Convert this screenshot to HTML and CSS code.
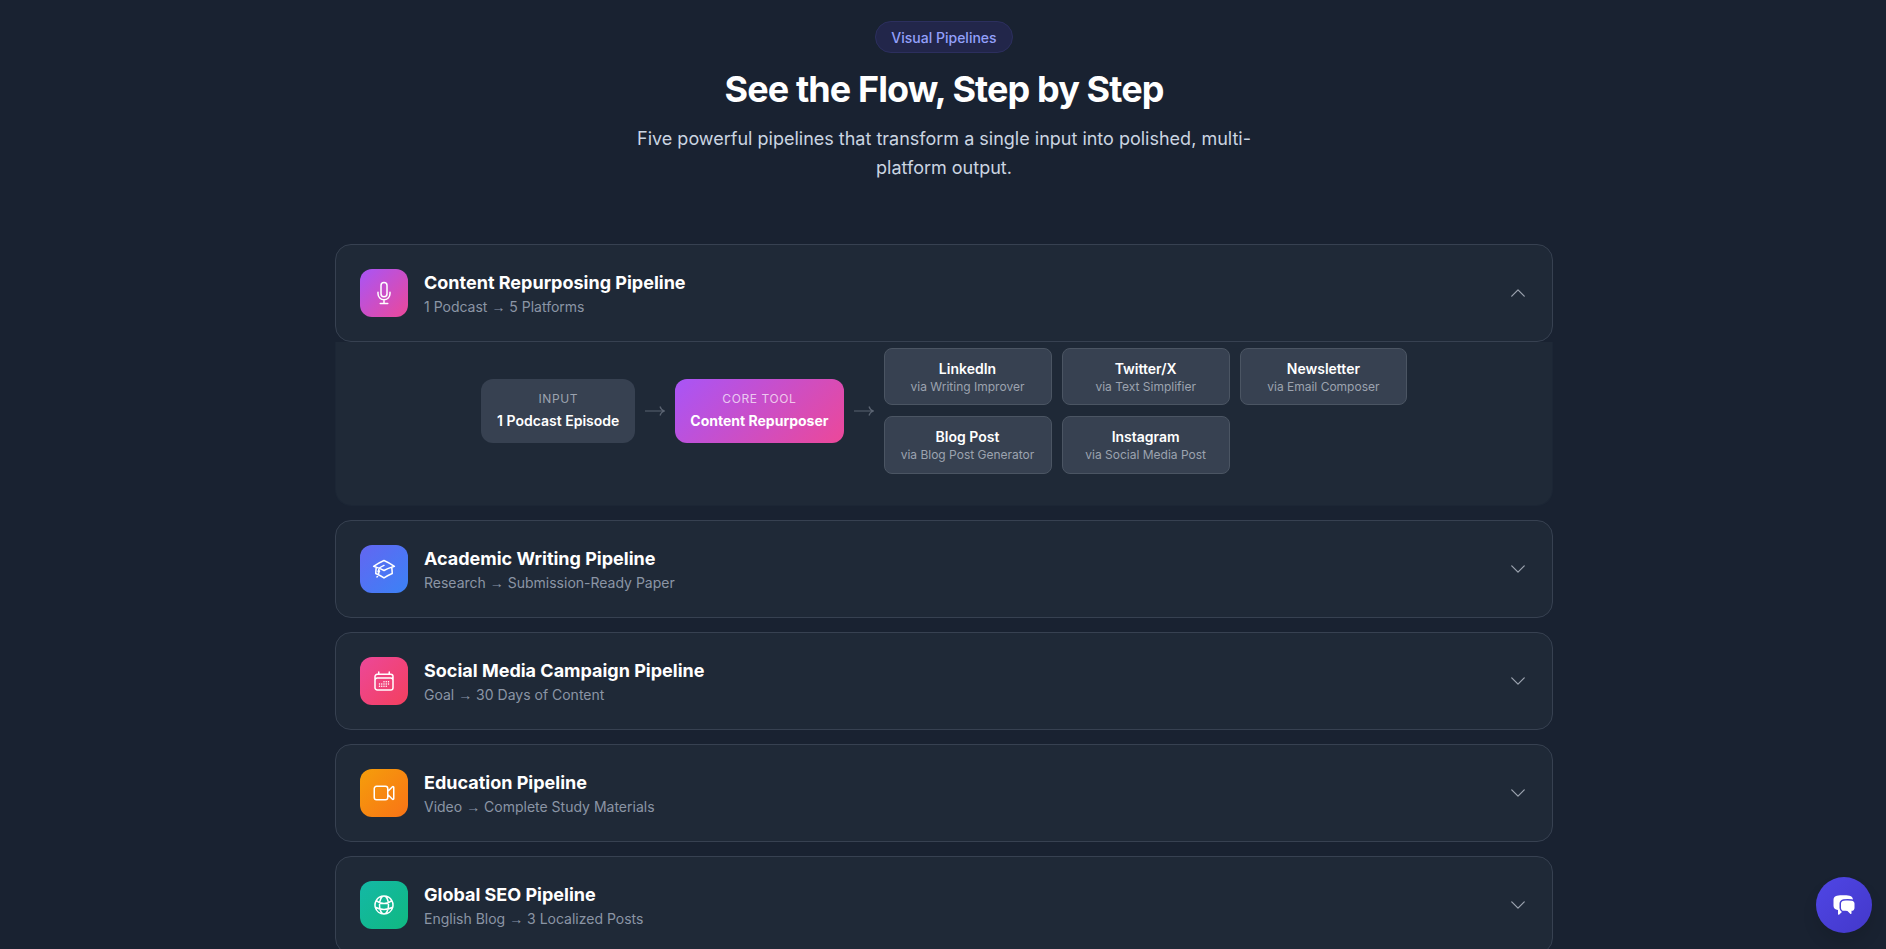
FILE: index.html
```html
<!DOCTYPE html>
<html lang="en">
<head>
    <meta charset="UTF-8">
    <meta name="viewport" content="width=device-width, initial-scale=1.0">
    <title>Visual Pipelines</title>
    <link rel="stylesheet" href="styles.css">
</head>
<body>
    <main class="section">
        <div class="section-head">
            <span class="badge">Visual Pipelines</span>
            <h1>See the Flow, Step by Step</h1>
            <p class="lead">Five powerful pipelines that transform a single input into polished, multi-platform output.</p>
        </div>

        <div class="pipelines">
            <div class="pipeline">
                <div class="pipeline-head">
                    <div class="pipeline-icon icon-purple">
                        <svg class="icon" viewBox="0 0 24 24"><path d="M12 18.75a6 6 0 0 0 6-6v-1.5m-6 7.5a6 6 0 0 1-6-6v-1.5m6 7.5v3.75m-3.75 0h7.5M12 15.75a3 3 0 0 1-3-3V4.5a3 3 0 1 1 6 0v8.25a3 3 0 0 1-3 3Z"/></svg>
                    </div>
                    <div class="pipeline-text">
                        <h3>Content Repurposing Pipeline</h3>
                        <p>1 Podcast <span class="to">→</span> 5 Platforms</p>
                    </div>
                    <svg class="chevron" viewBox="0 0 24 24"><path d="m4.5 15.75 7.5-7.5 7.5 7.5"/></svg>
                </div>
                <div class="pipeline-panel">
                    <div class="flow">
                        <div class="node">
                            <span class="node-label">Input</span>
                            <span class="node-value">1 Podcast Episode</span>
                        </div>
                        <svg class="arrow" viewBox="0 0 20 12"><path d="M0 6h19.5M15 1.5c.6 2.2 2.2 3.8 4.5 4.5-2.3.7-3.9 2.3-4.5 4.5"/></svg>
                        <div class="node node-core">
                            <span class="node-label">Core Tool</span>
                            <span class="node-value">Content Repurposer</span>
                        </div>
                        <svg class="arrow" viewBox="0 0 20 12"><path d="M0 6h19.5M15 1.5c.6 2.2 2.2 3.8 4.5 4.5-2.3.7-3.9 2.3-4.5 4.5"/></svg>
                        <div class="outputs">
                            <div class="output"><strong>LinkedIn</strong><span>via Writing Improver</span></div>
                            <div class="output"><strong>Twitter/X</strong><span>via Text Simplifier</span></div>
                            <div class="output"><strong>Newsletter</strong><span>via Email Composer</span></div>
                            <div class="output"><strong>Blog Post</strong><span>via Blog Post Generator</span></div>
                            <div class="output"><strong>Instagram</strong><span>via Social Media Post</span></div>
                        </div>
                    </div>
                </div>
            </div>

            <div class="pipeline pipeline-closed">
                <div class="pipeline-head">
                    <div class="pipeline-icon icon-blue">
                        <svg class="icon" viewBox="0 0 24 24"><path d="M4.26 10.147a60.438 60.438 0 0 0-.491 6.347A48.62 48.62 0 0 1 12 20.904a48.62 48.62 0 0 1 8.232-4.41 60.46 60.46 0 0 0-.491-6.347m-15.482 0a50.636 50.636 0 0 0-2.658-.813A59.906 59.906 0 0 1 12 3.493a59.903 59.903 0 0 1 10.399 5.84c-.896.248-1.783.52-2.658.814m-15.482 0A50.717 50.717 0 0 1 12 13.489a50.702 50.702 0 0 1 7.74-3.342M6.75 15a.75.75 0 1 0 0-1.5.75.75 0 0 0 0 1.5Zm0 0v-3.675A55.378 55.378 0 0 1 12 8.443m-7.007 11.55A5.981 5.981 0 0 0 6.75 15.75v-1.5"/></svg>
                    </div>
                    <div class="pipeline-text">
                        <h3>Academic Writing Pipeline</h3>
                        <p>Research <span class="to">→</span> Submission-Ready Paper</p>
                    </div>
                    <svg class="chevron" viewBox="0 0 24 24"><path d="m19.5 8.25-7.5 7.5-7.5-7.5"/></svg>
                </div>
            </div>

            <div class="pipeline pipeline-closed">
                <div class="pipeline-head">
                    <div class="pipeline-icon icon-pink">
                        <svg class="icon" viewBox="0 0 24 24"><path d="M6.75 3v2.25M17.25 3v2.25M3 18.75V7.5a2.25 2.25 0 0 1 2.25-2.25h13.5A2.25 2.25 0 0 1 21 7.5v11.25m-18 0A2.25 2.25 0 0 0 5.25 21h13.5A2.25 2.25 0 0 0 21 18.75m-18 0v-7.5A2.25 2.25 0 0 1 5.25 9h13.5A2.25 2.25 0 0 1 21 11.25v7.5m-9-6h.008v.008H12v-.008ZM12 15h.008v.008H12V15Zm0 2.25h.008v.008H12v-.008ZM9.75 15h.008v.008H9.75V15Zm0 2.25h.008v.008H9.75v-.008ZM7.5 15h.008v.008H7.5V15Zm0 2.25h.008v.008H7.5v-.008Zm6.75-4.5h.008v.008h-.008v-.008Zm0 2.25h.008v.008h-.008V15Zm0 2.25h.008v.008h-.008v-.008Zm2.25-4.5h.008v.008H16.5v-.008Zm0 2.25h.008v.008H16.5V15Z"/></svg>
                    </div>
                    <div class="pipeline-text">
                        <h3>Social Media Campaign Pipeline</h3>
                        <p>Goal <span class="to">→</span> 30 Days of Content</p>
                    </div>
                    <svg class="chevron" viewBox="0 0 24 24"><path d="m19.5 8.25-7.5 7.5-7.5-7.5"/></svg>
                </div>
            </div>

            <div class="pipeline pipeline-closed">
                <div class="pipeline-head">
                    <div class="pipeline-icon icon-orange">
                        <svg class="icon" viewBox="0 0 24 24"><path d="m15.75 10.5 4.72-4.72a.75.75 0 0 1 1.28.53v11.38a.75.75 0 0 1-1.28.53l-4.72-4.72M4.5 18.75h9a2.25 2.25 0 0 0 2.25-2.25v-9a2.25 2.25 0 0 0-2.25-2.25h-9A2.25 2.25 0 0 0 2.25 7.5v9a2.25 2.25 0 0 0 2.25 2.25Z"/></svg>
                    </div>
                    <div class="pipeline-text">
                        <h3>Education Pipeline</h3>
                        <p>Video <span class="to">→</span> Complete Study Materials</p>
                    </div>
                    <svg class="chevron" viewBox="0 0 24 24"><path d="m19.5 8.25-7.5 7.5-7.5-7.5"/></svg>
                </div>
            </div>

            <div class="pipeline pipeline-closed">
                <div class="pipeline-head">
                    <div class="pipeline-icon icon-green">
                        <svg class="icon" viewBox="0 0 24 24"><path d="M12 21a9.004 9.004 0 0 0 8.716-6.747M12 21a9.004 9.004 0 0 1-8.716-6.747M12 21c2.485 0 4.5-4.03 4.5-9S14.485 3 12 3m0 18c-2.485 0-4.5-4.03-4.5-9S9.515 3 12 3m0 0a8.997 8.997 0 0 1 7.843 4.582M12 3a8.997 8.997 0 0 0-7.843 4.582m15.686 0A11.953 11.953 0 0 1 12 10.5c-2.998 0-5.74-1.1-7.843-2.918m15.686 0A8.959 8.959 0 0 1 21 12c0 .778-.099 1.533-.284 2.253m0 0A17.919 17.919 0 0 1 12 16.5c-3.162 0-6.133-.815-8.716-2.247m0 0A9.004 9.004 0 0 1 3 12c0-1.605.42-3.113 1.157-4.418"/></svg>
                    </div>
                    <div class="pipeline-text">
                        <h3>Global SEO Pipeline</h3>
                        <p>English Blog <span class="to">→</span> 3 Localized Posts</p>
                    </div>
                    <svg class="chevron" viewBox="0 0 24 24"><path d="m19.5 8.25-7.5 7.5-7.5-7.5"/></svg>
                </div>
            </div>
        </div>
    </main>

    <button class="chat-button" type="button" aria-label="Open chat">
        <svg viewBox="0 0 24 24"><path d="M4.913 2.658c2.075-.27 4.19-.408 6.337-.408 2.147 0 4.262.139 6.337.408 1.922.25 3.291 1.861 3.405 3.727a4.403 4.403 0 0 0-1.032-.211 50.89 50.89 0 0 0-8.42 0c-2.358.196-4.04 2.19-4.04 4.434v4.286a4.47 4.47 0 0 0 2.433 3.984L7.28 21.53A.75.75 0 0 1 6 21v-4.03a48.527 48.527 0 0 1-1.087-.128C2.905 16.58 1.5 14.833 1.5 12.862V6.638c0-1.97 1.405-3.718 3.413-3.979Z"/><path d="M15.75 7.5c-1.376 0-2.739.057-4.086.169C10.124 7.797 9 9.103 9 10.609v4.285c0 1.507 1.128 2.814 2.67 2.94 1.243.102 2.5.157 3.768.165l2.782 2.781a.75.75 0 0 0 1.28-.53v-2.39l.33-.026c1.542-.125 2.67-1.433 2.67-2.94v-4.286c0-1.505-1.125-2.811-2.664-2.94A49.392 49.392 0 0 0 15.75 7.5Z"/></svg>
    </button>
</body>
</html>
```

FILE: styles.css
```css
* {
    box-sizing: border-box;
}
html, body {
    height: 100%;
}
body {
    margin: 0;
    overflow: hidden;
    background-color: #192231;
    color: #ffffff;
    font-family: "Inter", "Liberation Sans", sans-serif;
}
.section {
    padding: 21px 0 0 2px;
}
.section-head {
    display: flex;
    flex-direction: column;
    align-items: center;
    text-align: center;
    margin-bottom: 61.4px;
}
.badge {
    height: 32px;
    padding: 0 15px;
    display: flex;
    align-items: center;
    font-size: 14px;
    font-weight: 500;
    color: #93a0fb;
    background-color: #22264a;
    border: 1px solid #2c2f5e;
    border-radius: 16px;
}
h1 {
    margin: 16px 0;
    font-size: 36px;
    line-height: 40px;
    font-weight: 700;
    letter-spacing: -0.9px;
}
.lead {
    margin: 0;
    max-width: 672px;
    font-size: 18px;
    line-height: 28.8px;
    color: #cbd5e1;
}
.pipelines {
    width: 1218px;
    margin: 0 auto;
    display: flex;
    flex-direction: column;
    gap: 14px;
}
.pipeline-head {
    display: flex;
    align-items: center;
    gap: 16px;
    padding: 24px;
    background-color: #1f2937;
    border: 1px solid #374151;
    border-radius: 16px;
}
.pipeline-icon {
    width: 48px;
    height: 48px;
    flex-shrink: 0;
    display: flex;
    align-items: center;
    justify-content: center;
    border-radius: 12px;
}
.icon-purple { background: linear-gradient(135deg, #a855f7, #ec4899); }
.icon-blue { background: linear-gradient(135deg, #6366f1, #3b82f6); }
.icon-pink { background: linear-gradient(135deg, #ec4899, #f43f5e); }
.icon-orange { background: linear-gradient(135deg, #f59e0b, #f97316); }
.icon-green { background: linear-gradient(135deg, #14b8a6, #10b981); }
.icon {
    width: 24px;
    height: 24px;
    fill: none;
    stroke: #ffffff;
    stroke-width: 1.5;
    stroke-linecap: round;
    stroke-linejoin: round;
}
.pipeline-text {
    flex-grow: 1;
}
.pipeline-text h3 {
    margin: 0;
    font-size: 18px;
    line-height: 28px;
    font-weight: 700;
}
.pipeline-text p {
    margin: 0;
    font-size: 14px;
    line-height: 20px;
    color: #8b95a5;
}
.to {
    font-family: "Liberation Sans", sans-serif;
}
.chevron {
    width: 20px;
    height: 20px;
    fill: none;
    stroke: #9ca3af;
    stroke-width: 1.5;
    stroke-linecap: round;
    stroke-linejoin: round;
}
.pipeline-panel {
    padding: 6px 24px 31px;
    background-color: #1f2937;
    border: 1px solid #1c2635;
    border-top: none;
    border-radius: 0 0 16px 16px;
}
.flow {
    display: flex;
    align-items: center;
    justify-content: center;
}
.node {
    padding: 0 16px;
    height: 64px;
    display: flex;
    flex-direction: column;
    justify-content: center;
    align-items: center;
    gap: 4px;
    background-color: #374151;
    border-radius: 12px;
}
.node-label {
    font-size: 12px;
    line-height: 16px;
    letter-spacing: 0.6px;
    text-transform: uppercase;
    color: #9ca3af;
}
.node-value {
    font-size: 14px;
    line-height: 20px;
    font-weight: 600;
}
.node-core {
    padding: 0 15px;
    background: linear-gradient(135deg, #a855f7, #ec4899);
}
.node-core .node-label {
    color: rgba(255, 255, 255, 0.7);
}
.node-core .node-value {
    font-weight: 700;
}
.arrow {
    width: 20px;
    height: 12px;
    margin: 0 10px;
    fill: none;
    stroke: #5b6472;
    stroke-width: 1.2;
}
.outputs {
    display: grid;
    grid-template-columns: 168px 168px 167px;
    gap: 10.7px 10.2px;
}
.output {
    height: 57.5px;
    display: flex;
    flex-direction: column;
    align-items: center;
    justify-content: center;
    background-color: #374151;
    border: 1px solid #4b5563;
    border-radius: 8px;
}
.output strong {
    font-size: 14px;
    line-height: 20px;
    font-weight: 600;
}
.output span {
    font-size: 12px;
    line-height: 16px;
    color: #9ca3af;
}
.chat-button {
    position: fixed;
    right: 14px;
    bottom: 16px;
    width: 56px;
    height: 56px;
    padding: 0;
    display: flex;
    align-items: center;
    justify-content: center;
    border: none;
    border-radius: 50%;
    background: linear-gradient(135deg, #4f46e5, #4338ca);
    box-shadow: 0 10px 15px rgba(0, 0, 0, 0.1);
}
.chat-button svg {
    width: 24px;
    height: 24px;
    fill: #ffffff;
}
```
